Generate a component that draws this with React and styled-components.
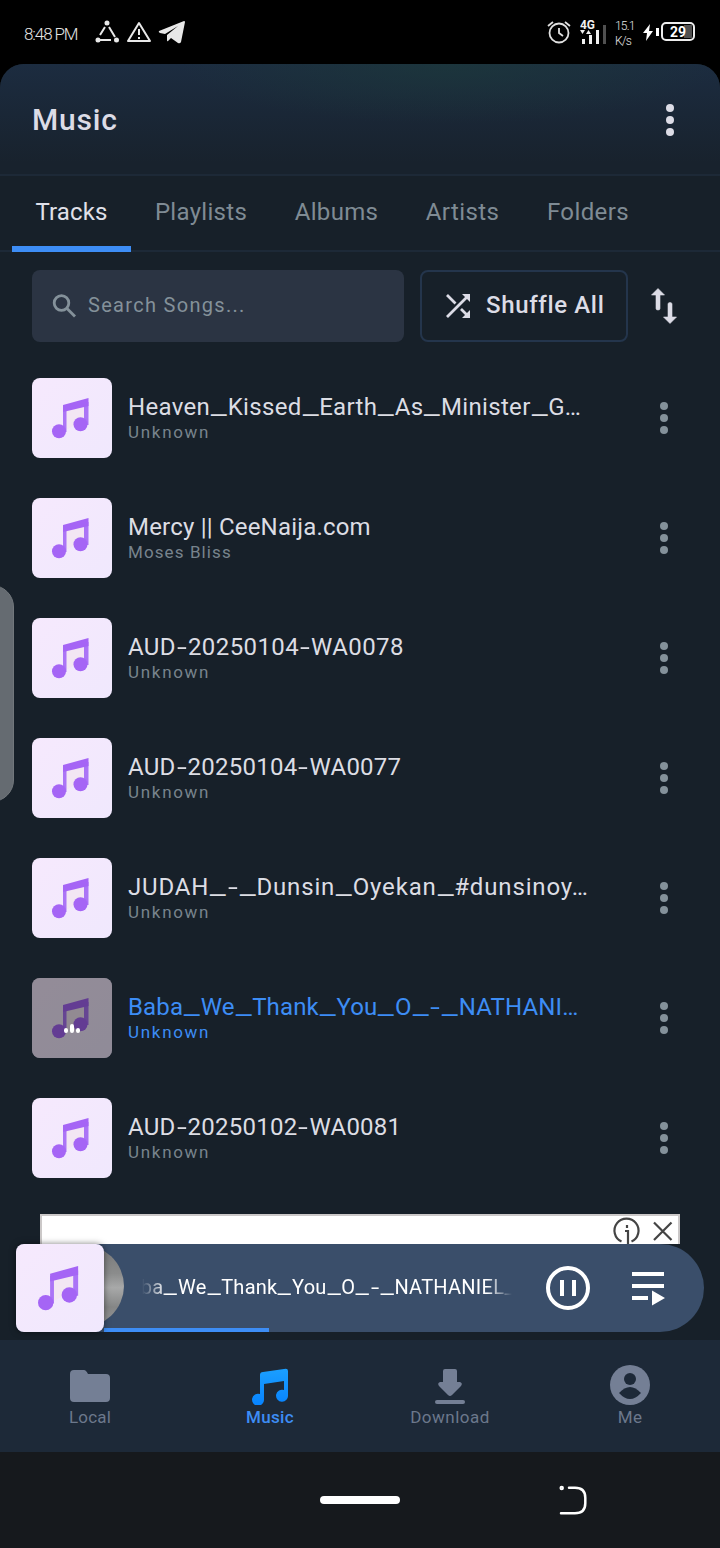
import styled, { createGlobalStyle, css } from "styled-components";

const GlobalStyle = createGlobalStyle`
  * {
    box-sizing: border-box;
  }

  body {
    margin: 0;
    background: #000000;
    font-family: Roboto, "Liberation Sans", sans-serif;
  }

  svg {
    display: block;
    flex-shrink: 0;
  }
`;

const Screen = styled.div`
  position: relative;
  width: 720px;
  height: 1548px;
  display: flex;
  flex-direction: column;
  overflow: hidden;
`;

const StatusBar = styled.div`
  height: 64px;
  display: flex;
  align-items: center;
  justify-content: space-between;
  padding: 0 25px 0 24px;
  color: #e4e4e4;
`;

const StatusGroup = styled.div`
  display: flex;
  align-items: center;
  gap: ${(props) => props.$gap}px;
`;

const Clock = styled.span`
  width: 65px;
  padding-top: 3px;
  font-size: 17px;
  font-weight: 300;
  letter-spacing: -1.1px;
  white-space: nowrap;
`;

const Speed = styled.div`
  width: 18px;
  padding-top: 3px;
  font-size: 12px;
  font-weight: 300;
  line-height: 15px;
  letter-spacing: -0.8px;
  white-space: nowrap;
`;

const Panel = styled.div`
  flex: 1;
  display: flex;
  flex-direction: column;
  border-radius: 24px 24px 0 0;
  background: #17202a;
  background: #172029;
  overflow: hidden;
`;

const Header = styled.header`
  height: 112px;
  display: flex;
  align-items: center;
  justify-content: space-between;
  padding: 2px 44px 0 32px;
  border-bottom: 2px solid #1d2937;
  background:
    radial-gradient(ellipse 270px 60px at 450px 0, rgba(28, 58, 58, 0.65), transparent),
    linear-gradient(#1c2c40, #18222d 90%);
`;

const Title = styled.h1`
  margin: -2px 0 0;
  color: #dcdce6;
  font-size: 30px;
  font-weight: 500;
  letter-spacing: 0.8px;
`;

const Tabs = styled.nav`
  height: 76px;
  display: flex;
  padding-left: 12px;
  border-bottom: 2px solid #1d2937;
`;

const Tab = styled.div`
  width: ${(props) => props.$width}px;
  height: 76px;
  padding-top: 21px;
  text-align: center;
  color: ${(props) => (props.$active ? "#e0e1ea" : "#7f8b94")};
  border-bottom: 6px solid ${(props) => (props.$active ? "#3d8df5" : "transparent")};
  font-size: 24px;
  line-height: 30px;
  letter-spacing: ${(props) => props.$track}px;
  white-space: nowrap;
`;

const Tools = styled.div`
  height: 106px;
  display: flex;
  align-items: center;
  gap: 16px;
  padding: 2px 32px 0;
`;

const Search = styled.div`
  width: 372px;
  height: 72px;
  display: flex;
  align-items: center;
  gap: 12px;
  padding-left: 20px;
  border-radius: 8px;
  background: #2b3443;
  color: #84919a;
  font-size: 20px;
  letter-spacing: 1.3px;
`;

const Shuffle = styled.button`
  width: 208px;
  height: 72px;
  display: flex;
  align-items: center;
  gap: 16px;
  padding: 0 0 0 24px;
  border: 2px solid #24354c;
  border-radius: 8px;
  background: transparent;
  color: #dcdce6;
  font-family: inherit;
  font-size: 24px;
  font-weight: 500;
  letter-spacing: 0.65px;
  white-space: nowrap;
`;

const ToolText = styled.span`
  padding-bottom: 2px;
`;

const Sort = styled.div`
  margin-left: 7px;
`;

const List = styled.div`
  height: 856px;
`;

const Row = styled.div`
  height: 120px;
  display: flex;
  align-items: center;
  gap: 16px;
  padding: 0 50px 0 32px;
  color: ${(props) => (props.$playing ? "#3d8df5" : "#dcdde4")};
`;

const Cover = styled.div`
  position: relative;
  width: ${(props) => props.$size}px;
  height: ${(props) => props.$size}px;
  flex-shrink: 0;
  border-radius: 8px;
  background: linear-gradient(135deg, #f6e9fd, #f0e8fd);
  overflow: hidden;
  ${(props) =>
    props.$raised &&
    css`
      box-shadow: 0 0 6px rgba(0, 0, 0, 0.5);
      z-index: 1;
    `}
`;

const Shade = styled.div`
  position: absolute;
  inset: 0;
  display: flex;
  justify-content: center;
  padding-top: 45px;
  background: rgba(0, 0, 0, 0.4);
`;

const Info = styled.div`
  flex: 1;
  display: flex;
  flex-direction: column;
  padding-bottom: 2px;
`;

const Song = styled.div`
  height: 30px;
  font-size: 24px;
  line-height: 30px;
  letter-spacing: ${(props) => props.$track}px;
  white-space: nowrap;
`;

const Dash = styled.span`
  display: inline-block;
  width: ${(props) => props.$width}em;
  letter-spacing: 0;
  text-align: center;
  transform: translateY(${(props) => props.$shift}px) scaleX(1.48);
`;

const Artist = styled.div`
  color: ${(props) => (props.$playing ? "#3d8df5" : "#78848d")};
  font-size: 17px;
  line-height: 20px;
  letter-spacing: ${(props) => props.$track}px;
`;

const Ad = styled.div`
  height: 30px;
  margin: 0 40px;
  display: flex;
  justify-content: flex-end;
  border: 2px solid #cbc8c8;
  border-bottom: 0;
  background: #ffffff;
  overflow: hidden;
`;

const Player = styled.div`
  height: 88px;
  margin: 0 16px;
  display: flex;
  align-items: center;
  border-radius: 8px 44px 44px 8px;
  background: #3a4e6a;
  color: #ffffff;
`;

const Track = styled.div`
  width: 442px;
  height: 88px;
`;

const TrackBody = styled.div`
  height: 84px;
  display: flex;
  align-items: center;
`;

const Disc = styled.div`
  width: 88px;
  height: 84px;
  margin-left: -68px;
  flex-shrink: 0;
  border-radius: 50%;
  background: linear-gradient(#777777, #8b8c8c 35%, #a8a9a9 52%, #858686 75%, #999999);
`;

const Marquee = styled.div`
  width: 370px;
  margin-left: 18px;
  padding-top: 2px;
  overflow: hidden;
  font-size: 20px;
  line-height: 28px;
  letter-spacing: 0.25px;
  white-space: nowrap;
  mask-image: linear-gradient(90deg, transparent, #000 24px, #000 345px, transparent);
`;

const Scrolled = styled.div`
  margin-left: -25px;
`;

const Progress = styled.div`
  width: 165px;
  height: 4px;
  background: #3d8df5;
`;

const Queue = styled.div`
  margin-left: 40px;
`;

const BottomNav = styled.nav`
  height: 112px;
  margin-top: 8px;
  display: flex;
  background: #1d2938;
`;

const NavItem = styled.div`
  width: 180px;
  display: flex;
  flex-direction: column;
  align-items: center;
  padding-top: 25px;
  color: ${(props) => (props.$active ? "#3d8df5" : "#6c788c")};
  font-size: 17px;
  font-weight: ${(props) => (props.$active ? 500 : 400)};
  line-height: 24px;
  letter-spacing: ${(props) => props.$track}px;
`;

const SystemBar = styled.div`
  height: 96px;
  display: grid;
  grid-template-columns: 1fr 80px 1fr;
  align-items: center;
  background: #16191d;
`;

const HomePill = styled.div`
  grid-column: 2;
  height: 8px;
  border-radius: 4px;
  background: #ffffff;
`;

const Back = styled.div`
  padding-left: 157px;
`;

const EdgeHandle = styled.div`
  position: absolute;
  left: -30px;
  top: 585px;
  width: 44px;
  height: 217px;
  border: 1px solid #72777c;
  border-radius: 27px;
  background: #656b71;
`;

const tabs = [
  { label: "Tracks", width: 119, track: 0.1 },
  { label: "Playlists", width: 140, track: 0.3 },
  { label: "Albums", width: 131, track: 0.3 },
  { label: "Artists", width: 121, track: 0.4 },
  { label: "Folders", width: 130, track: 0.4 },
];

const songs = [
  { title: "Heaven_Kissed_Earth_As_Minister_G…", artist: "Unknown", track: 0.33 },
  { title: "Mercy || CeeNaija.com", artist: "Moses Bliss", track: 0.2 },
  { title: "AUD-20250104-WA0078", artist: "Unknown", track: 0.4 },
  { title: "AUD-20250104-WA0077", artist: "Unknown", track: 0.25 },
  { title: "JUDAH_-_Dunsin_Oyekan_#dunsinoy…", artist: "Unknown", track: 0.85 },
  { title: "Baba_We_Thank_You_O_-_NATHANI…", artist: "Unknown", track: 0.15, playing: true },
  { title: "AUD-20250102-WA0081", artist: "Unknown", track: 0.25 },
];

const Dots = ({ color }) => (
  <svg width="12" height="34" viewBox="0 0 12 34" fill={color}>
    <circle cx="6" cy="5" r="4" />
    <circle cx="6" cy="17" r="4" />
    <circle cx="6" cy="29" r="4" />
  </svg>
);

const Note = ({ size }) => (
  <svg width={size} height={size} viewBox="0 0 80 80">
    <path d="M34 32 52 28v14l-18 10z" fill="#f3e6f3" />
    <path d="M52 24h4.500v23H52zM31 29h3.500v25H31z" fill="#ab74f6" />
    <path d="M31 27 56.500 20v8L31 34z" fill="#a565f5" />
    <circle cx="27" cy="53.300" r="7" fill="#a565f5" />
    <circle cx="48.500" cy="46.300" r="7" fill="#a565f5" />
  </svg>
);

const Wide = ({ text }) =>
  text.split(/([_-])/).map((part, i) => {
    if (part === "_") {
      return (
        <Dash key={i} $width={0.73} $shift={-1}>
          _
        </Dash>
      );
    }
    if (part === "-") {
      return (
        <Dash key={i} $width={0.5} $shift={0}>
          -
        </Dash>
      );
    }
    return part;
  });

const LeftStatus = () => (
  <StatusGroup $gap={6}>
    <Clock>8:48 PM</Clock>
    <svg width="25" height="24" viewBox="0 0 25 24" stroke="#e8e8e8" strokeWidth="2" fill="#e8e8e8">
      <path d="M10 7 5 15M14 7l6 10M5 20h11" fill="none" />
      <circle cx="12" cy="3" r="1.500" />
      <circle cx="3" cy="20" r="1.500" />
      <circle cx="21.500" cy="20" r="1.500" />
    </svg>
    <svg width="26" height="24" viewBox="0 0 26 24" fill="none" stroke="#e8e8e8" strokeWidth="2">
      <path d="M13 3 24 21H2zM13 9v6M13 17v2" strokeLinejoin="round" />
    </svg>
    <svg width="28" height="26" viewBox="0 0 28 26" fill="#e8e8e8">
      <path d="M1 12 26 2q1 0 1 1l-4 20q-1 2-3 1l-7-5-3 3q-1 1-1-1v-5L20 7 7 15l-5-1q-2-1-1-2z" />
    </svg>
  </StatusGroup>
);

const RightStatus = () => (
  <StatusGroup $gap={9}>
    <svg width="24" height="24" viewBox="0 0 24 24" fill="none" stroke="#e0e0e0" strokeWidth="1.800">
      <circle cx="12" cy="13" r="9.500" />
      <path d="M12 8v5l4 3M1 6l5-4M23 6l-5-4" />
    </svg>
    <svg width="26" height="28" viewBox="0 0 26 28">
      <text x="0" y="11" fontSize="13" fontWeight="700" fill="#f0f0f0" textLength="15" lengthAdjust="spacingAndGlyphs">
        4G
      </text>
      <path d="M0 12h5l-2.500 4zM6 16h5l-2.500-4zM2 21h3v5H2zM9 17h3v9H9zM16 12h3v14h-3z" fill="#f0f0f0" />
      <path d="M23 7h3v19h-3z" fill="#505050" />
    </svg>
    <Speed>
      15.1
      <br />
      K/s
    </Speed>
    <svg width="53" height="22" viewBox="0 0 53 22">
      <path d="M8 3 1 12h4l-1 8 7-10H7z" fill="#ffffff" />
      <rect x="14" y="7" width="3" height="8" fill="#ffffff" />
      <rect x="20" y="2" width="32" height="17" rx="4" fill="none" stroke="#ededed" strokeWidth="2" />
      <rect x="42" y="4" width="8" height="13" fill="#505050" />
      <text x="28" y="16" fontSize="15" fontWeight="700" fill="#ffffff" textLength="16" lengthAdjust="spacingAndGlyphs">
        29
      </text>
    </svg>
  </StatusGroup>
);

const App = () => {
  return (
    <Screen>
      <GlobalStyle />
      <StatusBar>
        <LeftStatus />
        <RightStatus />
      </StatusBar>
      <Panel>
        <Header>
          <Title>Music</Title>
          <Dots color="#dcdce6" />
        </Header>
        <Tabs>
          {tabs.map((tab, i) => (
            <Tab key={tab.label} $width={tab.width} $track={tab.track} $active={i === 0}>
              {tab.label}
            </Tab>
          ))}
        </Tabs>
        <Tools>
          <Search>
            <svg width="24" height="24" viewBox="0 0 24 24" fill="none" stroke="#84919a" strokeWidth="2.800">
              <circle cx="9.500" cy="9" r="7.300" />
              <path d="m15 14.500 8 8" />
            </svg>
            <ToolText>Search Songs...</ToolText>
          </Search>
          <Shuffle>
            <svg width="24" height="24" viewBox="0 0 24 24" fill="none" stroke="#dcdce6" strokeWidth="2.800">
              <path d="m1 1 8.500 8.500M1 23 21 3M15 15l6 6" />
              <path d="M16 0h8v8zM24 16v8h-8z" fill="#dcdce6" stroke="none" />
            </svg>
            <ToolText>Shuffle All</ToolText>
          </Shuffle>
          <Sort>
            <svg width="26" height="36" viewBox="0 0 26 36" fill="#dcdce6" stroke="#dcdce6" strokeWidth="0.600">
              <path d="M7 0.500 13.500 7H9v13.500q0 1.500-2 1.500t-2-1.500V7H0.500zM19 35.500 12.500 29H17V16q0-1.500 2-1.500t2 1.500v13h4.500z" />
            </svg>
          </Sort>
        </Tools>
        <List>
          {songs.map((song) => (
            <Row key={song.title} $playing={song.playing}>
              <Cover $size={80}>
                <Note size={80} />
                {song.playing && (
                  <Shade>
                    <svg width="16" height="10" viewBox="0 0 16 10" stroke="#ffffff" strokeWidth="4" strokeLinecap="round">
                      <path d="M2 7v1M8 3v5M14 7v1" />
                    </svg>
                  </Shade>
                )}
              </Cover>
              <Info>
                <Song $track={song.track}>
                  <Wide text={song.title} />
                </Song>
                <Artist $track={song.artist === "Unknown" ? 1.7 : 1.1} $playing={song.playing}>
                  {song.artist}
                </Artist>
              </Info>
              <Dots color="#84919a" />
            </Row>
          ))}
        </List>
        <Ad>
          <svg width="66" height="28" viewBox="0 0 66 28" fill="none" stroke="#444444" strokeWidth="2.200">
            <path d="M9.500 25.500A12 12 0 1 1 19.500 25.500M13 15h3v13M15 9v3M42 6.500 59.500 24M59.500 6.500 42 24" />
          </svg>
        </Ad>
        <Player>
          <Cover $size={88} $raised>
            <Note size={88} />
          </Cover>
          <Track>
            <TrackBody>
              <Disc />
              <Marquee>
                <Scrolled>
                  <Wide text="Baba_We_Thank_You_O_-_NATHANIEL_" />
                </Scrolled>
              </Marquee>
            </TrackBody>
            <Progress />
          </Track>
          <svg width="44" height="44" viewBox="0 0 44 44" fill="none" stroke="#ffffff" strokeWidth="4">
            <circle cx="22" cy="22" r="20" />
            <path d="M16 14v16M28 14v16" />
          </svg>
          <Queue>
            <svg width="36" height="36" viewBox="0 0 36 36" fill="#ffffff">
              <path d="M2 2h32v4H2zM2 14h32v4H2zM2 26h16v4H2zM22 20.500l13 7.500-13 7.500z" />
            </svg>
          </Queue>
        </Player>
        <BottomNav>
          <NavItem $track={0.2}>
            <svg width="40" height="40" viewBox="0 0 40 40" fill="#747f95">
              <path d="M4 5h10q2 0 4 4h18q4 0 4 4v20q0 4-4 4H4q-4 0-4-4V9q0-4 4-4z" />
            </svg>
            Local
          </NavItem>
          <NavItem $active $track={0.3}>
            <svg width="40" height="40" viewBox="0 0 40 40">
              <defs>
                <linearGradient id="blue" x2="0" y2="1">
                  <stop stopColor="#1b9fff" />
                  <stop offset="1" stopColor="#0783ff" />
                </linearGradient>
              </defs>
              <path
                d="M10 10q0-3 3-3l21-3q4-1 4 2v24a6 6 0 1 1-4-5V16l-20 3v15a6 6 0 1 1-4-5z"
                fill="url(#blue)"
              />
            </svg>
            Music
          </NavItem>
          <NavItem $track={0.5}>
            <svg width="40" height="40" viewBox="0 0 40 40" fill="#747f95">
              <path d="M15 4h10q2 0 2 2v11h3q3 1 1 4l-9 9q-2 2-4 0l-9-9q-2-3 1-4h3V6q0-2 2-2z" />
              <rect x="5" y="35" width="30" height="4" rx="2" />
            </svg>
            Download
          </NavItem>
          <NavItem $track={0.2}>
            <svg width="40" height="40" viewBox="0 0 40 40">
              <circle cx="20" cy="20" r="20" fill="#747f95" />
              <circle cx="20" cy="14" r="6" fill="#1d2938" />
              <path d="M9 28q11-12 22 0-11 12-22 0z" fill="#1d2938" />
            </svg>
            Me
          </NavItem>
        </BottomNav>
        <SystemBar>
          <HomePill />
          <Back>
            <svg width="32" height="32" viewBox="0 0 32 32" fill="none" stroke="#ffffff" strokeWidth="2.500" strokeLinecap="round">
              <path d="M12 3.700h6q10.300 0 10.300 10v5.600q0 10-10.300 10H4" />
              <circle cx="4.700" cy="4" r="1" />
            </svg>
          </Back>
        </SystemBar>
      </Panel>
      <EdgeHandle />
    </Screen>
  );
};

export default App;
